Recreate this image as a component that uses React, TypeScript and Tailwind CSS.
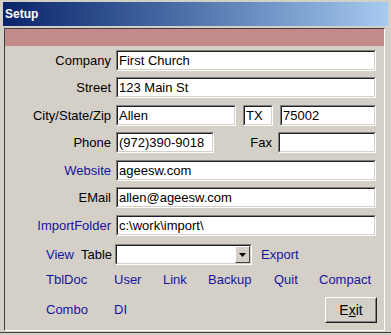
import React from "react";

function Field({ w, text }: { w: string; text?: string }) {
  return (
    <div className={`${w} h-[21px] border border-t-[#808080] border-l-[#808080] border-r-white border-b-white`}>
      <div className="h-full bg-white border border-t-[#202020] border-l-[#202020] border-r-[#d4d0c8] border-b-[#d4d0c8] pl-[1px] text-[13px] leading-[17px] text-black whitespace-nowrap overflow-hidden">
        {text}
      </div>
    </div>
  );
}

function Row({ label, blue, mt, children }: { label: string; blue?: boolean; mt: string; children: React.ReactNode }) {
  return (
    <div className={`flex items-center h-[21px] ${mt}`}>
      <div className={`w-[106px] text-right text-[13px] ${blue ? "text-[#1414a0]" : "text-black"}`}>{label}</div>
      <div className="ml-[5px] flex items-center">{children}</div>
    </div>
  );
}

export default function App() {
  return (
    <div className="w-[391px] h-[335px] bg-[#d4d0c8] pt-[2px] px-[3px] flex flex-col overflow-hidden font-['Liberation_Sans',Arial,sans-serif]">
      {/* Title bar */}
      <div className="h-[24px] bg-gradient-to-r from-[#0a246a] to-[#a6caf0] flex items-center pl-[2px]">
        <span className="text-white font-bold text-[12px]">Setup</span>
      </div>

      {/* Panel */}
      <div className="mt-[2px] ml-[1px] w-[381px] h-[303px] border border-t-[#404040] border-l-[#404040] border-r-white border-b-white flex flex-col">
        <div className="h-[17px] bg-[#c38a8a]" />

        <Row label="Company" mt="mt-[4px]">
          <Field w="w-[260px]" text="First Church" />
        </Row>
        <Row label="Street" mt="mt-[6px]">
          <Field w="w-[260px]" text="123 Main St" />
        </Row>
        <Row label="City/State/Zip" mt="mt-[7px]">
          <Field w="w-[120px]" text="Allen" />
          <div className="ml-[7px]">
            <Field w="w-[30px]" text="TX" />
          </div>
          <div className="ml-[7px]">
            <Field w="w-[96px]" text="75002" />
          </div>
        </Row>
        <Row label="Phone" mt="mt-[6px]">
          <Field w="w-[98px]" text="(972)390-9018" />
          <span className="w-[58px] text-right text-[13px] text-black">Fax</span>
          <div className="ml-[6px]">
            <Field w="w-[98px]" />
          </div>
        </Row>
        <Row label="Website" blue mt="mt-[7px]">
          <Field w="w-[260px]" text="ageesw.com" />
        </Row>
        <Row label="EMail" mt="mt-[6px]">
          <Field w="w-[260px]" text="allen@ageesw.com" />
        </Row>
        <Row label="ImportFolder" blue mt="mt-[7px]">
          <Field w="w-[260px]" text="c:\work\import\" />
        </Row>

        {/* View / Table row */}
        <div className="flex items-center h-[21px] mt-[8px] text-[13px]">
          <span className="ml-[41px] w-[35px] text-[#1414a0]">View</span>
          <span className="text-black">Table</span>
          <div className="ml-[3px] w-[137px] h-[21px] border border-t-[#808080] border-l-[#808080] border-r-white border-b-white">
            <div className="h-full bg-white border border-t-[#202020] border-l-[#202020] border-r-[#d4d0c8] border-b-[#d4d0c8] flex justify-end items-stretch">
              <div className="w-[15px] bg-[#d4d0c8] border border-t-white border-l-white border-r-[#404040] border-b-[#404040] flex items-center justify-center">
                <svg width="7" height="4" viewBox="0 0 7 4">
                  <path d="M0 0h7L3.5 4z" fill="#000" />
                </svg>
              </div>
            </div>
          </div>
          <span className="ml-[9px] text-[#1414a0]">Export</span>
        </div>

        {/* Links row 1 */}
        <div className="flex items-center h-[16px] mt-[7px] text-[13px] text-[#1414a0]">
          <span className="ml-[41px] w-[68px]">TblDoc</span>
          <span className="w-[49px]">User</span>
          <span className="w-[45px]">Link</span>
          <span className="w-[66px]">Backup</span>
          <span className="w-[45px]">Quit</span>
          <span>Compact</span>
        </div>

        {/* Links row 2 */}
        <div className="flex items-center h-[26px] mt-[9px] text-[13px] text-[#1414a0]">
          <span className="ml-[41px] w-[68px]">Combo</span>
          <span>DI</span>
          <div className="ml-auto mr-[7px] w-[52px] h-[26px] border border-t-white border-l-white border-r-[#202020] border-b-[#202020]">
            <div className="h-full border border-t-[#d4d0c8] border-l-[#d4d0c8] border-r-[#808080] border-b-[#808080] flex items-center justify-center text-[14px] text-black">
              <span>
                E<span className="underline">x</span>it
              </span>
            </div>
          </div>
        </div>
      </div>
      <div className="mt-[1px] -mx-[3px] h-[1px] bg-[#404040]" />
    </div>
  );
}
